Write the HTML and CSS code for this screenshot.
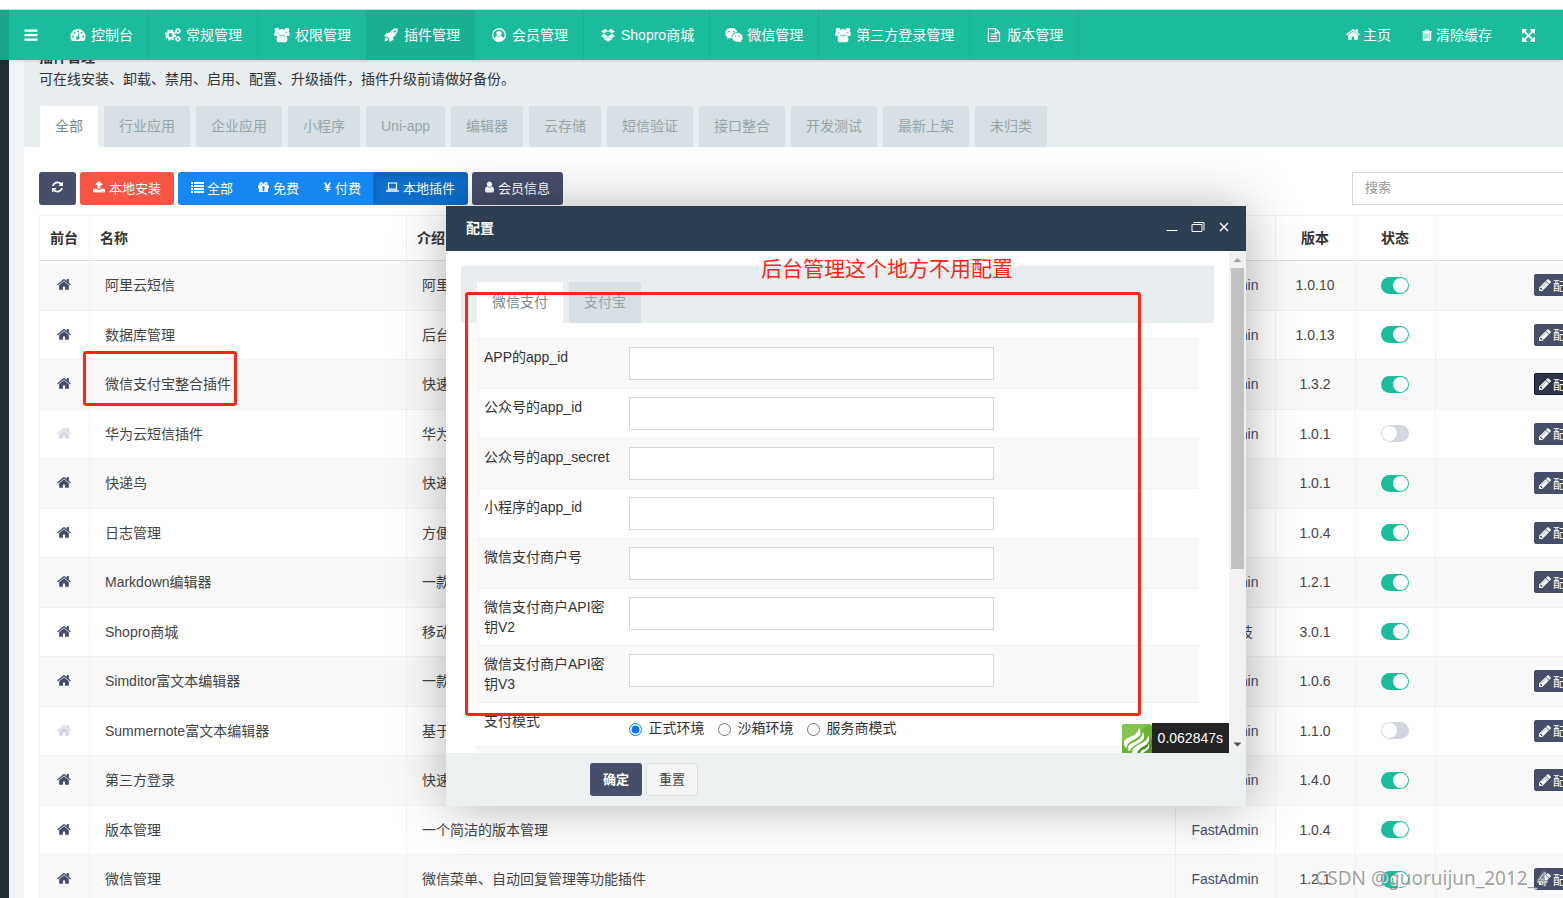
FILE: index.html
```html
<!DOCTYPE html>
<html lang="zh-CN">
<head>
<meta charset="utf-8">
<title>插件管理</title>
<link rel="stylesheet" href="styles.css">
</head>
<body>
<svg class="sprite" aria-hidden="true">
  <symbol id="bars" viewBox="0 0 14 14"><path d="M.5 1.500h13v2.200H.5zM.5 6h13v2.200H.5zM.5 10.500h13v2.200H.5z"/></symbol>
  <symbol id="dash" viewBox="0 0 16 16"><path fill-rule="evenodd" d="M8 2a7.500 7.500 0 0 0-6.400 11.400q.3.500.8.500h11.200q.5 0 .8-.5A7.500 7.500 0 0 0 8 2zM3 8.500a1 1 0 1 1 0 2 1 1 0 0 1 0-2zM4.500 5a1 1 0 1 1 0 2 1 1 0 0 1 0-2zM8 3.400a1 1 0 1 1 0 2 1 1 0 0 1 0-2zM11.500 5a1 1 0 1 1 0 2 1 1 0 0 1 0-2zM13 8.500a1 1 0 1 1 0 2 1 1 0 0 1 0-2zM8.500 6.200l1 .3-.8 3a1.700 1.700 0 1 1-1-.3z"/></symbol>
  <symbol id="cogs" viewBox="0 0 16 16"><circle cx="5.500" cy="8" r="3.200" fill="none" stroke="currentColor" stroke-width="2.400"/><circle cx="5.500" cy="8" r="4.900" fill="none" stroke="currentColor" stroke-width="1.400" stroke-dasharray="2 1.850"/><circle cx="13" cy="4" r="1.600" fill="none" stroke="currentColor" stroke-width="1.400"/><circle cx="13" cy="4" r="2.500" fill="none" stroke="currentColor" stroke-width="1" stroke-dasharray="1.200 .8"/><circle cx="13" cy="12" r="1.600" fill="none" stroke="currentColor" stroke-width="1.400"/><circle cx="13" cy="12" r="2.500" fill="none" stroke="currentColor" stroke-width="1" stroke-dasharray="1.200 .8"/></symbol>
  <symbol id="group" viewBox="0 0 16 16"><circle cx="3" cy="3" r="2.300"/><circle cx="13" cy="3" r="2.300"/><circle cx="8" cy="5.200" r="3.300"/><path d="M1.200 5Q.2 5.200.2 7.500q0 1.500 1.200 1.500h2.600q.8-.7 1.500-.8Q4.500 6.800 4.500 5.300 3 5.800 1.200 5zM14.800 5q1 .2 1 2.500 0 1.500-1.200 1.500h-2.600q-.8-.7-1.500-.8 1-1.400 1-2.900 1.500.5 3.300-.3zM5.200 8.600q2.800 1.600 5.600 0 2.600.2 2.600 3.900 0 2.700-2.200 2.700H4.800q-2.200 0-2.200-2.700 0-3.700 2.600-3.900z"/></symbol>
  <symbol id="rocket" viewBox="0 0 14 14"><path fill-rule="evenodd" d="M13.700.4Q9.300 0 6.300 3.700L5.500 4.800l-2.600.1q-.3 0-.5.300L.3 7.900q-.2.400.3.500l2.600.4 2 2 .4 2.800q.1.500.5.300l2.900-1.800q.3-.2.300-.5l.1-2.700Q14 5.500 13.700.4zM10.800 2.300a1.100 1.100 0 1 1 0 2.200 1.100 1.100 0 0 1 0-2.200zM2.400 9.500Q.9 9.700.7 13.300q3.600-.2 3.800-1.700z"/></symbol>
  <symbol id="circle-user" viewBox="0 0 14 14"><circle cx="7" cy="7" r="6.300" fill="none" stroke="currentColor" stroke-width="1.300"/><circle cx="7" cy="5.400" r="2.700"/><path d="M2.300 11q.5-2.800 2.500-3.100 2.200 1.300 4.400 0 2 .3 2.500 3.100Q9.500 13.400 7 13.300 4.500 13.400 2.300 11z"/></symbol>
  <symbol id="box" viewBox="0 0 14 14"><path d="M4.100.8L7 3.100 2.900 5.600.2 3.400zM9.900.8L7 3.100l4.100 2.500 2.700-2.200zM.2 7.900l2.700-2.200L7 8.200l-2.900 2.300zM13.800 7.900l-2.700-2.200L7 8.200l2.900 2.300zM2.900 10.300l1.200.8L7 8.700l2.900 2.400 1.200-.8v.9L7 13.700l-4.100-2.500z"/></symbol>
  <symbol id="wechat" viewBox="0 0 18 16"><path fill-rule="evenodd" d="M6.500 1C2.900 1 .3 3.300.3 6.200q0 2.500 2.300 4.100L2 12.200l2.300-1.100q1.100.3 2.400.3-.8-5.500 5.500-6.300Q11.100 1 6.500 1zM4.400 3.700a.9.900 0 1 1 0 1.800.9.900 0 0 1 0-1.800zM8.700 3.700a.9.900 0 1 1 0 1.800.9.900 0 0 1 0-1.800z"/><path fill-rule="evenodd" d="M12.500 6C9.600 6 7.300 8 7.300 10.400s2.300 4.400 5.200 4.400q1 0 1.900-.3l1.900 1-.5-1.600q1.900-1.400 1.900-3.500C17.700 8 15.400 6 12.500 6zM10.800 8.300a.7.700 0 1 1 0 1.400.7.700 0 0 1 0-1.400zM14.200 8.300a.7.700 0 1 1 0 1.400.7.700 0 0 1 0-1.400z"/></symbol>
  <symbol id="file" viewBox="0 0 14 14"><path fill="none" stroke="currentColor" stroke-width="1.200" d="M1.400.7h7.100l4 4v8.600H1.400zM8.400.7v4h4M3.800 6h6.200M3.800 8.300h6.200M3.800 10.700h6.200"/></symbol>
  <symbol id="home" viewBox="64 128 1664 1664"><path d="M1472 992v480q0 26-19 45t-45 19h-384v-384h-256v384h-384q-26 0-45-19t-19-45v-480q0-1 .5-3t.5-3l575-474 575 474q1 2 1 6zm223-69l-62 74q-8 9-21 11h-3q-13 0-21-7l-692-577-692 577q-12 8-24 7-13-2-21-11l-62-74q-8-10-7-23.500t11-21.500l719-599q32-26 76-26t76 26l244 204v-195q0-14 9-23t23-9h192q14 0 23 9t9 23v408l219 182q10 8 11 21.500t-7 23.500z"/></symbol>
  <symbol id="trash" viewBox="0 0 12 14"><path fill-rule="evenodd" d="M4 .8h4l.8 1.700h2.900v1.500h-.8v8.200q0 1.500-1.200 1.500h-7.400q-1.200 0-1.200-1.500V4H.3V2.500h2.900zM4.500 1.800l-.3.700h3.600l-.3-.7zM3.200 5v6.500h.9V5zM5.500 5v6.500h.9V5zM7.900 5v6.500h.9V5z"/></symbol>
  <symbol id="expand" viewBox="128 128 1536 1536"><path d="M1411 541l-355 355 355 355 144-144q29-31 70-14 39 17 39 59v448q0 26-19 45t-45 19h-448q-42 0-59-40-17-39 14-69l144-144-355-355-355 355 144 144q31 30 14 69-17 40-59 40h-448q-26 0-45-19t-19-45v-448q0-42 40-59 39-17 69 14l144 144 355-355-355-355-144 144q-19 19-45 19-12 0-24-5-40-17-40-59v-448q0-26 19-45t45-19h448q42 0 59 40 17 39-14 69l-144 144 355 355 355-355-144-144q-31-30-14-69 17-40 59-40h448q26 0 45 19t19 45v448q0 42-39 59-13 5-25 5-26 0-45-19z"/></symbol>
  <symbol id="refresh" viewBox="128 128 1536 1536"><path d="M1639 1056q0 5-1 7-64 268-268 434.500t-478 166.500q-146 0-282.500-55t-243.500-157l-129 129q-19 19-45 19t-45-19-19-45v-448q0-26 19-45t45-19h448q26 0 45 19t19 45-19 45l-137 137q71 66 161 102t187 36q134 0 250-65t186-179q11-17 53-117 8-23 30-23h192q13 0 22.500 9.500t9.500 22.500zm25-800v448q0 26-19 45t-45 19h-448q-26 0-45-19t-19-45 19-45l138-138q-148-137-349-137-134 0-250 65t-186 179q-11 17-53 117-8 23-30 23h-199q-13 0-22.500-9.500t-9.500-22.500v-7q65-268 270-434.500t480-166.500q146 0 284 55.500t245 156.500l130-129q19-19 45-19t45 19 19 45z"/></symbol>
  <symbol id="upload" viewBox="64 64 1664 1664"><path d="M1344 1472q0-26-19-45t-45-19-45 19-19 45 19 45 45 19 45-19 19-45zm256 0q0-26-19-45t-45-19-45 19-19 45 19 45 45 19 45-19 19-45zm128-224v320q0 40-28 68t-68 28h-1472q-40 0-68-28t-28-68v-320q0-40 28-68t68-28h427q21 56 70.500 92t110.500 36h256q61 0 110.500-36t70.500-92h427q40 0 68 28t28 68zm-325-648q-17 40-59 40h-256v448q0 26-19 45t-45 19h-256q-26 0-45-19t-19-45v-448h-256q-42 0-59-40-17-39 14-69l448-448q18-19 45-19t45 19l448 448q31 30 14 69z"/></symbol>
  <symbol id="list" viewBox="0 0 13 12"><path d="M0 1h2v2H0zM3 1h10v2H3zM0 4h2v2H0zM3 4h10v2H3zM0 7h2v2H0zM3 7h10v2H3zM0 10h2v2H0zM3 10h10v2H3z"/></symbol>
  <symbol id="gift" viewBox="0 0 12 12"><path fill-rule="evenodd" d="M0 4h12v3h-1v4.500H1V7H0zM5 4.500v6h2v-6z"/><path fill="none" stroke="currentColor" stroke-width="1.300" d="M5.500 4H3.300a1.400 1.400 0 1 1 1.200-2.300L6 4l1.500-2.300A1.400 1.400 0 1 1 8.700 4H6.500"/></symbol>
  <symbol id="yen" viewBox="0 0 8 12"><path fill="none" stroke="currentColor" stroke-width="2" d="M.9 1L4 6l3.100-5M4 6v5.500"/><path d="M.6 5.600h6.800v1.300H.6zM.6 8h6.800v1.300H.6z"/></symbol>
  <symbol id="laptop" viewBox="0 0 14 12"><path fill="none" stroke="currentColor" stroke-width="1.300" d="M2.700 1.700h8.600v6.500H2.700z"/><path d="M0 9.500h14v.7q0 1-1.200 1H1.200q-1.200 0-1.200-1z"/></symbol>
  <symbol id="user" viewBox="256 128 1280 1536"><path d="M1536 1399q0 109-62.500 187t-150.500 78h-854q-88 0-150.500-78t-62.500-187q0-85 8.500-160.500t31.500-152 58.500-131 94-89 134.500-34.500q131 128 313 128t313-128q76 0 134.500 34.500t94 89 58.500 131 31.500 152 8.500 160.500zm-256-887q0 159-112.500 271.500t-271.500 112.500-271.500-112.500-112.500-271.500 112.500-271.500 271.500-112.500 271.500 112.500 112.500 271.500z"/></symbol>
  <symbol id="pencil" viewBox="128 128 1536 1536"><path d="M491 1536l91-91-235-235-91 91v107h128v128h107zm523-928q0-22-22-22-10 0-17 7l-542 542q-7 7-7 17 0 22 22 22 10 0 17-7l542-542q7-7 7-17zm-54-192l416 416-832 832h-416v-416zm683 96q0 53-37 90l-166 166-416-416 166-165q36-38 90-38 53 0 91 38l235 234q37 39 37 91z"/></symbol>
</svg>

<div class="strip"></div>
<header class="header">
  <div class="header-side"></div>
  <nav class="nav" aria-label="主导航">
    <a class="toggle" href="#" aria-label="菜单"><svg class="i14"><use href="#bars"/></svg></a>
    <a class="nav-item" href="#"><span class="fw"><svg class="i16"><use href="#dash"/></svg></span>控制台</a>
    <a class="nav-item" href="#"><span class="fw"><svg class="i16"><use href="#cogs"/></svg></span>常规管理</a>
    <a class="nav-item" href="#"><span class="fw"><svg class="i16"><use href="#group"/></svg></span>权限管理</a>
    <a class="nav-item current" href="#"><span class="fw"><svg class="i14"><use href="#rocket"/></svg></span>插件管理</a>
    <a class="nav-item" href="#"><span class="fw"><svg class="i14"><use href="#circle-user"/></svg></span>会员管理</a>
    <a class="nav-item" href="#"><span class="fw"><svg class="i14"><use href="#box"/></svg></span>Shopro商城</a>
    <a class="nav-item" href="#"><span class="fw"><svg class="i18"><use href="#wechat"/></svg></span>微信管理</a>
    <a class="nav-item" href="#"><span class="fw"><svg class="i16"><use href="#group"/></svg></span>第三方登录管理</a>
    <a class="nav-item" href="#"><span class="fw"><svg class="i14"><use href="#file"/></svg></span>版本管理</a>
  </nav>
  <nav class="nav nav-right" aria-label="工具">
    <a class="tool" href="#"><svg class="i14"><use href="#home"/></svg>主页</a>
    <a class="tool" href="#"><svg class="i12"><use href="#trash"/></svg>清除缓存</a>
    <a class="tool" href="#" aria-label="全屏"><svg class="i13"><use href="#expand"/></svg></a>
  </nav>
</header>

<div class="layout">
  <aside class="sidebar"></aside>
  <main class="content">
    <section class="panel">
      <div class="panel-head">
        <h1 class="title">插件管理</h1>
        <p class="lead">可在线安装、卸载、禁用、启用、配置、升级插件，插件升级前请做好备份。</p>
        <div class="tabs">
          <a class="tab active" href="#">全部</a><a class="tab" href="#">行业应用</a><a class="tab" href="#">企业应用</a><a class="tab" href="#">小程序</a><a class="tab" href="#">Uni-app</a><a class="tab" href="#">编辑器</a><a class="tab" href="#">云存储</a><a class="tab" href="#">短信验证</a><a class="tab" href="#">接口整合</a><a class="tab" href="#">开发测试</a><a class="tab" href="#">最新上架</a><a class="tab" href="#">未归类</a>
        </div>
      </div>
      <div class="panel-body">
        <div class="toolbar">
          <button class="btn dark" aria-label="刷新"><svg class="w11"><use href="#refresh"/></svg></button>
          <button class="btn red"><svg class="i12"><use href="#upload"/></svg>本地安装</button>
          <div class="group">
            <button class="btn blue"><svg class="w13"><use href="#list"/></svg>全部</button>
            <button class="btn blue"><svg class="w11"><use href="#gift"/></svg>免费</button>
            <button class="btn blue"><svg class="w7"><use href="#yen"/></svg>付费</button>
            <button class="btn blue pressed"><svg class="w13"><use href="#laptop"/></svg>本地插件</button>
          </div>
          <button class="btn dark"><svg class="w9"><use href="#user"/></svg>会员信息</button>
          <input class="search" type="search" placeholder="搜索" aria-label="搜索">
        </div>
        <table class="list">
          <colgroup><col class="c-front"><col class="c-name"><col><col class="c-author"><col class="c-ver"><col class="c-ver"><col class="c-act"></colgroup>
          <thead><tr><th class="mid">前台</th><th>名称</th><th>介绍</th><th class="mid">作者</th><th class="mid">版本</th><th class="mid">状态</th><th></th></tr></thead>
          <tbody>
            <tr><td class="mid"><svg class="i14 home"><use href="#home"/></svg></td><td>阿里云短信</td><td>阿里云短信</td><td class="mid author">FastAdmin</td><td class="mid">1.0.10</td><td class="mid"><input class="switch" type="checkbox" checked aria-label="阿里云短信"></td><td class="act"><button class="btn-xs"><svg class="i12"><use href="#pencil"/></svg>配置</button></td></tr>
            <tr><td class="mid"><svg class="i14 home"><use href="#home"/></svg></td><td>数据库管理</td><td>后台数据库</td><td class="mid author">FastAdmin</td><td class="mid">1.0.13</td><td class="mid"><input class="switch" type="checkbox" checked aria-label="数据库管理"></td><td class="act"><button class="btn-xs"><svg class="i12"><use href="#pencil"/></svg>配置</button></td></tr>
            <tr><td class="mid"><svg class="i14 home"><use href="#home"/></svg></td><td>微信支付宝整合插件</td><td>快速整合</td><td class="mid author">FastAdmin</td><td class="mid">1.3.2</td><td class="mid"><input class="switch" type="checkbox" checked aria-label="微信支付宝整合插件"></td><td class="act"><button class="btn-xs focus"><svg class="i12"><use href="#pencil"/></svg>配置</button></td></tr>
            <tr><td class="mid"><svg class="i14 home off"><use href="#home"/></svg></td><td>华为云短信插件</td><td>华为云短信</td><td class="mid author">FastAdmin</td><td class="mid">1.0.1</td><td class="mid"><input class="switch" type="checkbox" aria-label="华为云短信插件"></td><td class="act"><button class="btn-xs"><svg class="i12"><use href="#pencil"/></svg>配置</button></td></tr>
            <tr><td class="mid"><svg class="i14 home"><use href="#home"/></svg></td><td>快递鸟</td><td>快递鸟</td><td></td><td class="mid">1.0.1</td><td class="mid"><input class="switch" type="checkbox" checked aria-label="快递鸟"></td><td class="act"><button class="btn-xs"><svg class="i12"><use href="#pencil"/></svg>配置</button></td></tr>
            <tr><td class="mid"><svg class="i14 home"><use href="#home"/></svg></td><td>日志管理</td><td>方便管理</td><td></td><td class="mid">1.0.4</td><td class="mid"><input class="switch" type="checkbox" checked aria-label="日志管理"></td><td class="act"><button class="btn-xs"><svg class="i12"><use href="#pencil"/></svg>配置</button></td></tr>
            <tr><td class="mid"><svg class="i14 home"><use href="#home"/></svg></td><td>Markdown编辑器</td><td>一款编辑器</td><td class="mid author">FastAdmin</td><td class="mid">1.2.1</td><td class="mid"><input class="switch" type="checkbox" checked aria-label="Markdown编辑器"></td><td class="act"><button class="btn-xs"><svg class="i12"><use href="#pencil"/></svg>配置</button></td></tr>
            <tr><td class="mid"><svg class="i14 home"><use href="#home"/></svg></td><td>Shopro商城</td><td>移动商城</td><td class="mid author">星品科技</td><td class="mid">3.0.1</td><td class="mid"><input class="switch" type="checkbox" checked aria-label="Shopro商城"></td><td class="act"></td></tr>
            <tr><td class="mid"><svg class="i14 home"><use href="#home"/></svg></td><td>Simditor富文本编辑器</td><td>一款编辑器</td><td class="mid author">FastAdmin</td><td class="mid">1.0.6</td><td class="mid"><input class="switch" type="checkbox" checked aria-label="Simditor富文本编辑器"></td><td class="act"><button class="btn-xs"><svg class="i12"><use href="#pencil"/></svg>配置</button></td></tr>
            <tr><td class="mid"><svg class="i14 home off"><use href="#home"/></svg></td><td>Summernote富文本编辑器</td><td>基于编辑器</td><td class="mid author">FastAdmin</td><td class="mid">1.1.0</td><td class="mid"><input class="switch" type="checkbox" aria-label="Summernote富文本编辑器"></td><td class="act"><button class="btn-xs"><svg class="i12"><use href="#pencil"/></svg>配置</button></td></tr>
            <tr><td class="mid"><svg class="i14 home"><use href="#home"/></svg></td><td>第三方登录</td><td>快速登录</td><td class="mid author">FastAdmin</td><td class="mid">1.4.0</td><td class="mid"><input class="switch" type="checkbox" checked aria-label="第三方登录"></td><td class="act"><button class="btn-xs"><svg class="i12"><use href="#pencil"/></svg>配置</button></td></tr>
            <tr><td class="mid"><svg class="i14 home"><use href="#home"/></svg></td><td>版本管理</td><td>一个简洁的版本管理</td><td class="mid author">FastAdmin</td><td class="mid">1.0.4</td><td class="mid"><input class="switch" type="checkbox" checked aria-label="版本管理"></td><td class="act"></td></tr>
            <tr><td class="mid"><svg class="i14 home"><use href="#home"/></svg></td><td>微信管理</td><td>微信菜单、自动回复管理等功能插件</td><td class="mid author">FastAdmin</td><td class="mid">1.2.1</td><td class="mid"><input class="switch" type="checkbox" checked aria-label="微信管理"></td><td class="act"><button class="btn-xs"><svg class="i12"><use href="#pencil"/></svg>配置</button></td></tr>
          </tbody>
        </table>
      </div>
    </section>
  </main>
</div>

<div class="dialog" role="dialog" aria-labelledby="dlg-title">
  <div class="dialog-title">
    <h2 class="dialog-name" id="dlg-title">配置</h2>
    <button class="win" aria-label="最小化"><svg class="i14" viewBox="0 0 14 14"><path d="M1.500 9h11v1h-11z"/></svg></button>
    <button class="win" aria-label="还原"><svg class="i14" viewBox="0 0 14 14"><path fill="none" stroke="currentColor" d="M1 3.500h10v7H1zM2.500 1.500h10.500v8"/></svg></button>
    <button class="win" aria-label="关闭"><svg class="i14" viewBox="0 0 14 14"><path fill="none" stroke="currentColor" stroke-width="1.400" d="M3 2l8 8M11 2l-8 8"/></svg></button>
  </div>
  <div class="dialog-body">
    <div class="scroller">
      <div class="dialog-tabs tabs"><a class="tab active" href="#">微信支付</a><a class="tab" href="#">支付宝</a></div>
      <form class="form">
        <div class="row"><label class="label" for="f1">APP的app_id</label><div class="field"><input class="text" id="f1"></div></div>
        <div class="row"><label class="label" for="f2">公众号的app_id</label><div class="field"><input class="text" id="f2"></div></div>
        <div class="row"><label class="label" for="f3">公众号的app_secret</label><div class="field"><input class="text" id="f3"></div></div>
        <div class="row"><label class="label" for="f4">小程序的app_id</label><div class="field"><input class="text" id="f4"></div></div>
        <div class="row"><label class="label" for="f5">微信支付商户号</label><div class="field"><input class="text" id="f5"></div></div>
        <div class="row"><label class="label" for="f6">微信支付商户API密钥V2</label><div class="field"><input class="text" id="f6"></div></div>
        <div class="row"><label class="label" for="f7">微信支付商户API密钥V3</label><div class="field"><input class="text" id="f7"></div></div>
        <div class="row"><span class="label">支付模式</span><div class="field radios">
          <label class="radio"><input class="dot" type="radio" name="mode" checked>正式环境</label>
          <label class="radio"><input class="dot" type="radio" name="mode">沙箱环境</label>
          <label class="radio"><input class="dot" type="radio" name="mode">服务商模式</label>
        </div></div>
        <div class="row"><span class="label"></span><div class="field"></div></div>
      </form>
      <div class="trace">
        <svg class="trace-logo" viewBox="0 0 30 29"><path fill="#69b32f" d="M3 0h24q3 0 3 3v26H0V3q0-3 3-3z"/><path fill="#83c44f" d="M3 0h24L0 19V3q0-3 3-3z"/><path fill="#509627" d="M30 14v15H14z"/><path fill="#fff" d="M17 4q4 6-2 10-8 4-9 6-2 2-1 4-4-2-3-6 1-3 6-5 8-3 9-9zM26 11q4 7-4 11-6 3-7 7h-5q0-6 8-9 8-3 8-9zM27 20q1 4-2 6l-4 3h-3q1-3 5-4 3-2 4-5zM21 8q4 7-4 11-8 4-9 8-3-1-2-4 1-3 6-5 8-3 9-10z"/></svg>
        <span class="trace-time">0.062847s</span>
      </div>
    </div>
    <div class="bar" aria-hidden="true">
      <svg class="arrow" viewBox="0 0 17 17"><path fill="#a3a3a3" d="M4.500 11L8.500 7l4 4z"/></svg>
      <div class="thumb"></div>
      <svg class="arrow" viewBox="0 0 17 17"><path fill="#505050" d="M4.500 6.500h8l-4 4z"/></svg>
    </div>
  </div>
  <div class="dialog-foot"><button class="btn dark strong">确定</button><button class="btn plain">重置</button></div>
</div>

<div class="mark mark-row"></div>
<div class="mark mark-form"></div>
<div class="note">后台管理这个地方不用配置</div>
<div class="watermark">CSDN @guoruijun_2012_4</div>
</body>
</html>
```
FILE: styles.css
```css
* { box-sizing: border-box; }
body {
  margin: 0;
  height: 100vh;
  overflow: hidden;
  position: relative;
  display: flex;
  flex-direction: column;
  background: #fff;
  color: #333;
  font: 14px/20px "Liberation Sans", "Noto Sans CJK SC", sans-serif;
}
a { color: inherit; text-decoration: none; }
button, input { font-family: inherit; }
svg { fill: currentColor; flex: none; }
.sprite { position: absolute; width: 0; height: 0; }
.i12 { width: 12px; height: 12px; }
.i13 { width: 13px; height: 13px; }
.i14 { width: 14px; height: 14px; }
.i16 { width: 16px; height: 16px; }
.i18 { width: 18px; height: 16px; }
.w7 { width: 7px; height: 12px; }
.w9 { width: 9px; height: 12px; }
.w11 { width: 11px; height: 12px; }
.w13 { width: 13px; height: 12px; }

.strip { flex: none; height: 10px; border-bottom: 1px solid #d5dbdb; }
.header {
  flex: none;
  display: flex;
  height: 50px;
  position: relative;
  z-index: 1;
  background: #1abc9c;
  color: #fff;
  box-shadow: 0 1px 3px rgba(0, 0, 0, .12);
}
.header-side { width: 9px; background: #17a689; }
.nav { display: flex; }
.nav-right { margin-left: auto; padding-right: 13px; }
.toggle, .nav-item, .tool { display: flex; align-items: center; padding: 0 15px; white-space: nowrap; }
.toggle { width: 45px; }
.nav-item { gap: 4px; border-right: 1px solid #19b092; }
.nav-item.current { background: #19b092; border-right: 0; }
.fw { display: flex; justify-content: center; width: 18px; }
.tool { gap: 3px; }

.layout { flex: 1; display: flex; min-height: 0; }
.sidebar { flex: none; width: 9px; background: #222d32; }
.content { flex: 1; min-width: 0; overflow: hidden; padding-left: 15px; background: #f0f4f7; }
/* the list is wider than the viewport and runs off its right edge */
.panel { margin-right: -132px; background: #fff; }
.panel-head { display: flow-root; margin-top: -13px; background: #e8edf0; padding: 0 16px; }
.title { margin: 0 0 0 -1px; font-size: 14px; line-height: 20px; }
.lead { margin: 2px 0 17px -1px; }
.tabs { display: flex; gap: 6px; }
.tab {
  padding: 10px 15px;
  line-height: 21px;
  border-radius: 2px 2px 0 0;
  background: #d8dfe5;
  color: #95a5a6;
  white-space: nowrap;
}
.tab.active { background: #fff; color: #7b8a8b; }
.panel-body { padding: 25px 15px 0; }

.toolbar { display: flex; gap: 4px; margin-bottom: 10px; }
.group { display: flex; }
.btn {
  display: flex;
  align-items: center;
  gap: 4px;
  height: 33px;
  padding: 0 12px 3px;
  border: 1px solid transparent;
  border-radius: 3px;
  color: #fff;
  font-size: 13px;
  white-space: nowrap;
}
.dark { background: #474e6a; }
.red { background: #f75444; }
.blue { background: #1688f1; border-radius: 0; margin-left: -1px; }
.blue:first-child { margin-left: 0; border-radius: 3px 0 0 3px; gap: 3px; }
.blue:last-child { border-radius: 0 3px 3px 0; }
.pressed { background: #0d6ecb; box-shadow: inset 0 3px 5px rgba(0, 0, 0, .125); }
.plain { background: #f4f4f4; border-color: #ddd; color: #444; }
.strong { font-weight: 600; }
.search {
  width: 328px;
  height: 33px;
  margin-left: auto;
  padding: 0 12px 2px;
  border: 1px solid #d2d6de;
  background: #fff;
  font-size: 13px;
}
.search::placeholder { color: #999; }

.list {
  width: 100%;
  table-layout: fixed;
  border-collapse: separate;
  border-spacing: 0;
  border: solid #f1f1f1;
  border-width: 1px 0 0 1px;
}
.c-front { width: 50px; }
.c-name { width: 317px; }
.c-author { width: 100px; }
.c-ver { width: 80px; }
.c-act { width: 244px; }
.list th {
  height: 45px;
  padding: 0 10px;
  text-align: left;
  border-right: 1px solid #f1f1f1;
  border-bottom: 1px solid #ddd;
}
.list td {
  height: 50px;
  padding: 0 15px 1px;
  color: #444;
  border-right: 1px solid #f1f1f1;
  border-bottom: 1px solid #f1f1f1;
}
.list tr:nth-child(even) td { height: 49px; }
.list tbody tr:nth-child(odd) { background: #f9f9f9; }
.list .mid { text-align: center; padding: 0 1px 1px 0; }
.list .author { color: #444c69; }
.list .act { padding-left: 98px; }
.home { display: block; margin: 0 auto; color: #444c69; }
.off { color: #d2d6de; }
.switch {
  appearance: none;
  display: block;
  width: 28px;
  height: 17px;
  margin: 0 auto;
  padding: 1px;
  border-radius: 9px;
  background: #d2d6de;
}
.switch::before { content: ""; display: block; width: 15px; height: 15px; border-radius: 50%; background: #fff; }
.switch:checked { background: #1abc9c; }
.switch:checked::before { margin-left: auto; }
.btn-xs {
  display: flex;
  align-items: center;
  gap: 2px;
  height: 22px;
  padding: 0 4px;
  border: 1px solid #444c69;
  border-radius: 2px;
  background: #474e6a;
  color: #fff;
  font-size: 12px;
}
.btn-xs.focus { background: #2f3549; border-color: #15182a; }

.dialog {
  position: absolute;
  left: 446px;
  top: 206px;
  z-index: 2;
  display: flex;
  flex-direction: column;
  width: 800px;
  height: 600px;
  background: #fff;
  box-shadow: 1px 1px 50px rgba(0, 0, 0, .3);
}
.dialog-title { display: flex; align-items: center; gap: 12px; height: 45px; padding: 0 15px 1px 20px; background: #2c3e50; color: #fff; }
.dialog-name { flex: 1; margin: 0; font-size: 14px; line-height: 20px; }
.win { display: flex; padding: 0; border: 0; background: none; color: #fff; }
.dialog-body { flex: 1; display: flex; min-height: 0; }
.scroller { flex: 1; position: relative; overflow: hidden; padding: 15px; }
.dialog-tabs { padding: 16px 16px 0; background: #e8edf0; }
.form { padding: 15px; }
.row { display: flex; border-top: 1px solid #f1f1f1; }
.row:nth-child(odd) { background: #f9f9f9; }
.label { width: 20%; padding: 8px; overflow-wrap: anywhere; }
.field { flex: 1; padding: 8px; }
.text { display: block; width: 65%; height: 33px; border: 1px solid #d2d6de; background: #fff; }
.radios { display: flex; gap: 13px; padding-top: 15px; }
.radio { display: flex; align-items: center; gap: 7px; }
.dot { width: 13px; height: 13px; margin: 2px 0 0; }
.trace { position: absolute; right: 0; bottom: 0; display: flex; align-items: flex-end; height: 30px; }
.trace-logo { width: 30px; height: 29px; }
.trace-time { padding: 0 6px; line-height: 30px; background: #232323; color: #fff; }
.bar { display: flex; flex-direction: column; align-items: center; width: 17px; background: #f1f1f1; }
.arrow { width: 17px; height: 17px; }
.thumb { width: 13px; height: 60%; flex: none; background: #c1c1c1; }
.bar .arrow:last-child { margin-top: auto; }
.dialog-foot { display: flex; align-items: flex-start; gap: 4px; height: 53px; padding: 10px 0 0 18%; background: #ecf0f1; }

.mark { position: absolute; z-index: 3; border: 3px solid #ff2413; border-radius: 3px; }
.mark-row { left: 83px; top: 351px; width: 154px; height: 55px; }
.mark-form { left: 465px; top: 292px; width: 676px; height: 424px; }
.note { position: absolute; z-index: 3; left: 761px; top: 254px; color: #ff2413; font-size: 21px; line-height: 30px; }
.watermark {
  position: absolute;
  z-index: 3;
  right: 16px;
  bottom: 8px;
  font: 19px/24px "Noto Sans", sans-serif;
  color: rgba(120, 120, 120, .7);
  text-shadow: 1px 1px 1px #fff;
}
```
